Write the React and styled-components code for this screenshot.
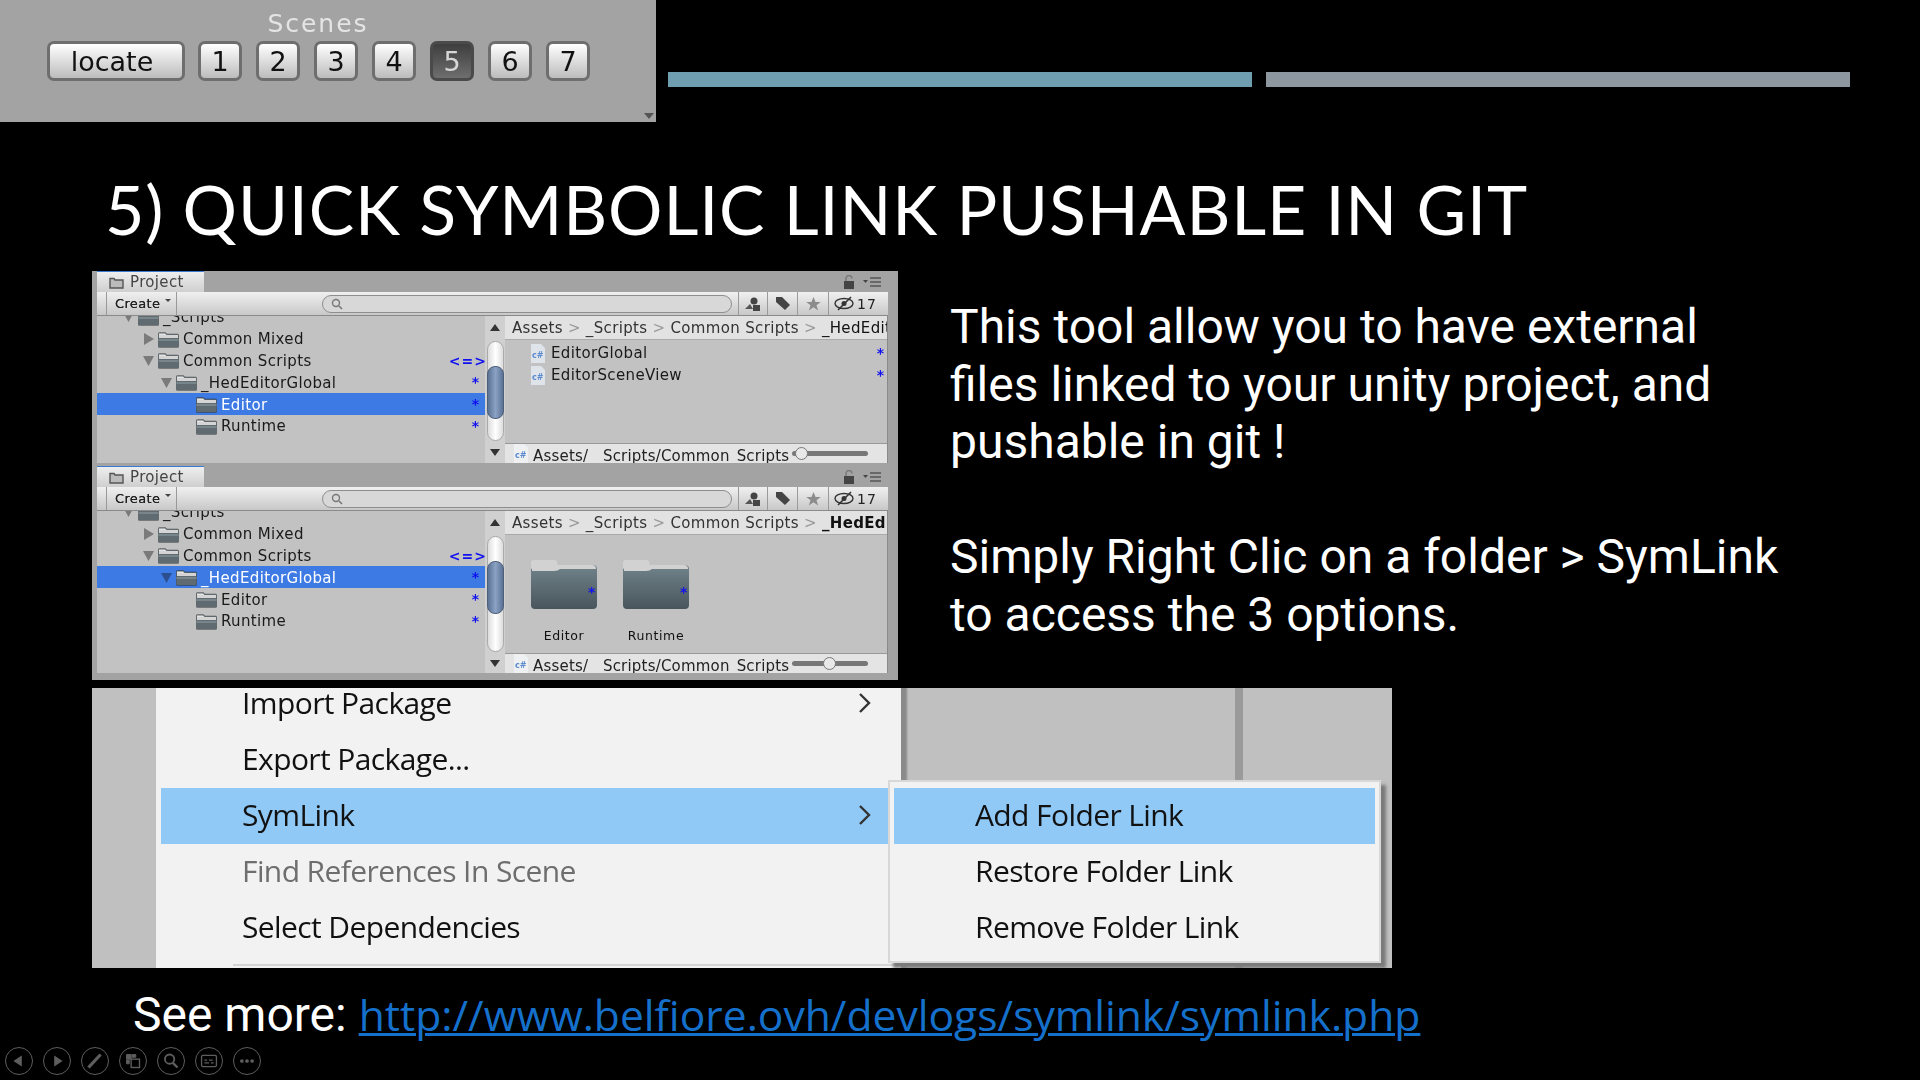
import React from "react";
import styled, { createGlobalStyle } from "styled-components";

const Global = createGlobalStyle`
  html, body { margin: 0; padding: 0; background: #000; }
  * { box-sizing: border-box; }
`;

const Slide = styled.div`
  width: 1920px; height: 1080px; background: #000; overflow: hidden;
  display: flex; flex-direction: column; position: relative;
  font-family: "Roboto", sans-serif;
`;
const TopRow = styled.div`display: flex; height: 122px; flex: none;`;
const ScenesPanel = styled.div`
  position: relative; width: 656px; background: #a3a3a3;
  padding: 10px 0 0 47px; display: flex; flex-direction: column;
  filter: blur(0.5px);
`;
const ScenesLabel = styled.div`
  width: 542px; text-align: center; font: 25px/28px "DejaVu Sans", sans-serif;
  letter-spacing: 2px; color: #e4e4e4; height: 31px;
`;
const SceneButtons = styled.div`display: flex; gap: 14px;`;
const SceneButton = styled.div`
  width: ${p => p.$w || 44}px; height: 40px; margin-right: ${p => p.$mr || 0}px;
  padding-right: ${p => p.$pr || 0}px;
  border: 3px solid ${p => p.$on ? "#4a4a4a" : "#6e6e6e"}; border-radius: 7px;
  background: ${p => p.$on ? "linear-gradient(#3e3e3e,#6e6e6e)" : "linear-gradient(#fff,#bcbcbc)"};
  color: ${p => p.$on ? "#d6d6d6" : "#111"};
  font: 27px/36px "DejaVu Sans", sans-serif; text-align: center;
`;
const CornerArrow = styled.div`
  position: absolute; right: 2px; bottom: 3px; width: 0; height: 0;
  border-left: 5px solid transparent; border-right: 5px solid transparent;
  border-top: 6px solid #555;
`;
const Bars = styled.div`display: flex; gap: 14px; padding: 72px 0 0 12px;`;
const Bar = styled.div`width: 584px; height: 15px; background: ${p => p.$c};`;
const Title = styled.h1`
  margin: 42px 0 0 105px; height: 107px; font: 400 68px/90px "Lato", sans-serif;
  letter-spacing: .87px; color: #fff; white-space: nowrap;
`;
const Content = styled.div`display: flex; height: 409px; flex: none;`;
const Unity = styled.div`
  width: 806px; margin-left: 92px; background: #a3a3a3; display: flex; flex-direction: column;
  color: #1a1a1a; font: 15px/22px "DejaVu Sans", sans-serif; letter-spacing: .35px;
  filter: blur(0.45px); overflow: hidden;
`;
const Project = styled.div`
  height: ${p => p.$h}px; flex: none; padding: 0 10px ${p => p.$pb}px 5px; display: flex; flex-direction: column;
`;
const TabRow = styled.div`display: flex; height: 21px; justify-content: space-between; flex: none;`;
const Tab = styled.div`
  width: 107px; border-top: 1px solid #3c7ad0; background: linear-gradient(#eee,#cfcfcf);
  color: #444; padding-left: 12px; display: flex; align-items: center; gap: 6px; font-size: 15px;
`;
const PaneTools = styled.div`display: flex; align-items: center; gap: 8px; padding-right: 7px;`;
const Toolbar = styled.div`
  height: 24px; flex: none; display: flex; align-items: stretch; padding-left: 9px;
  background: linear-gradient(#f0f0f0,#c8c8c8); border-bottom: 1px solid #8a8a8a;
`;
const CreateButton = styled.div`
  width: 71px; padding-left: 8px; font-size: 13px; border: 1px solid #999; border-width: 0 1px;
  color: #222; display: flex; align-items: center; gap: 5px; text-shadow: 0 0 .6px #222;
`;
const Caret = styled.span`
  width: 0; height: 0; border-left: 3px solid transparent; border-right: 3px solid transparent;
  border-top: 3px solid #444; margin-bottom: 6px;
`;
const Search = styled.div`
  width: 410px; height: 18px; margin: 3px 6px 0 145px; border: 1.5px solid #8e8e8e; border-radius: 9px;
  background: #d8d8d8; padding-left: 8px; display: flex; align-items: center; flex: none;
`;
const ToolIcon = styled.div`
  width: ${p => p.$w || 29}px; flex: none; border-left: 1px solid #9a9a9a;
  display: flex; align-items: center; justify-content: center; gap: 3px; font-size: 14px; color: #222; letter-spacing: 1px;
`;
const Split = styled.div`flex: 1; display: flex; min-height: 0;`;
const Tree = styled.div`width: 388px; flex: none; background: #c2c2c2; overflow: hidden; position: relative;`;
const TreeScroll = styled.div`margin-top: -10px;`;
const TreeRow = styled.div`
  height: 21.8px; display: flex; align-items: center; padding-left: ${p => p.$indent}px; padding-top: 1px; position: relative;
  background: ${p => p.$sel ? "#3d7ae4" : "transparent"}; color: ${p => p.$sel ? "#fff" : "#1a1a1a"};
  white-space: nowrap;
`;
const Arrow = styled.span`
  width: 15px; height: 12px; flex: none; display: flex; align-items: center;
`;
const RowMark = styled.span`
  position: absolute; right: ${p => p.$r ?? 3}px; top: ${p => p.$t || 0}px; color: #1010f0; font-weight: 700; font-size: 14px;
  letter-spacing: ${p => p.$ls || 0}px;
`;
const Scroll = styled.div`
  width: 20px; flex: none; background: #d0d0d0; position: relative; display: flex; flex-direction: column;
  align-items: center;
`;
const ScrollTrack = styled.div`
  width: 17px; height: ${p => p.$h}px; margin-top: 10px; border-radius: 9px; background: linear-gradient(90deg,#ddd,#fff,#ddd); border: 1px solid #aaa;
  position: relative; padding-top: 24px;
`;
const ScrollThumb = styled.div`
  width: 17px; height: 53px; margin-left: -1px; border-radius: 8px; border: 1px solid #4c5e78;
  background: linear-gradient(90deg,#5a7295,#8ba2c4,#5a7295);
`;
const ScrollArrow = styled.div`
  width: 0; height: 0; border-left: 5px solid transparent; border-right: 5px solid transparent;
  ${p => p.$up ? "border-bottom: 7px solid #333; margin-top: 8px;" : "border-top: 7px solid #333; margin-top: 8px;"}
`;
const Right = styled.div`flex: 1; min-width: 0; display: flex; flex-direction: column; background: #c2c2c2; border-right: 1px solid #8a8a8a;`;
const Crumbs = styled.div`
  height: 24px; flex: none; background: #e2e2e2; display: flex; align-items: center; padding-left: 7px;
  overflow: hidden; white-space: nowrap; gap: 5px; color: #333; border-bottom: 1px solid #aaa;
`;
const CrumbSep = styled.span`color: #999; font-size: 15px;`;
const CrumbLast = styled.span`font-weight: ${p => p.$bold ? 700 : 400}; color: #111;`;
const Files = styled.div`flex: 1; padding-top: 2px; min-height: 0;`;
const FileRow = styled.div`
  height: 22px; display: flex; align-items: center; padding-left: 26px; gap: 6px; position: relative;
`;
const FolderGrid = styled.div`flex: 1; display: flex; gap: 26px; padding: 22px 0 0 26px; min-height: 0;`;
const BigFolder = styled.div`
  width: 66px; position: relative; display: flex; flex-direction: column; align-items: center; font-size: 12.5px;
  line-height: 16px; font-weight: 500; letter-spacing: .6px; color: #111; gap: 18px;
`;
const BigMark = styled.span`
  position: absolute; right: 1px; top: 27px; color: #1010f0; font-size: 14px; font-weight: 700;
`;
const BottomBar = styled.div`
  height: 20px; flex: none; background: #e4e4e4; border-top: 1px solid #999; display: flex; padding-left: 9px; gap: 5px;
  overflow: hidden; align-items: flex-start; position: relative; white-space: nowrap;
`;
const PathText = styled.div`margin-top: 1px; color: #222; word-spacing: 2px; letter-spacing: .2px;`;
const Slider = styled.div`
  position: absolute; left: 287px; top: 7px; width: 76px; height: 5px; border-radius: 3px; background: #777;
`;
const SliderThumb = styled.div`
  position: absolute; left: ${p => p.$x}px; top: -4px; width: 13px; height: 13px; border-radius: 50%; background: #e8e8e8; border: 1px solid #777;
`;
const Body = styled.div`
  margin-left: 52px; padding-top: 27px; font-size: 48px; line-height: 57.5px; color: #fff; white-space: pre-line;
`;
const MenuShot = styled.div`
  width: 1300px; height: 280px; margin: 8px 0 0 92px; background: #c0c0c0; position: relative; overflow: hidden; flex: none;
  font: 500 30px/56px "Open Sans", sans-serif; color: #111; display: flex; filter: blur(0.4px);
`;
const MainMenu = styled.div`
  width: 745px; margin-left: 64px; background: #f2f2f2; padding-left: 5px; box-shadow: 6px 0 2px #8a8a8a; height: 292px; margin-top: -12px;
  flex: none;
`;
const MenuRow = styled.div`
  height: 56px; display: flex; justify-content: space-between; align-items: center;
  padding: 0 29px 2px 81px; white-space: nowrap; letter-spacing: -.6px;
  background: ${p => p.$hot ? "#90c8f6" : "transparent"}; color: ${p => p.$dim ? "#6e6e6e" : "#111"};
`;
const MenuSeparator = styled.div`height: 2px; margin: 8px 0 0 72px; background: #d4d4d4;`;
const Divider = styled.div`width: 8px; height: 100%; background: #9a9a9a; margin-left: 334px; flex: none;`;
const Submenu = styled.div`
  position: absolute; left: 796px; top: 92px; width: 493px; height: 183px; background: #f2f2f2;
  border: 2px solid #d8d8d8; padding: 6px 4px; box-shadow: 5px 5px 3px #7a7a7a;
`;
const SubRow = styled(MenuRow)`padding: 0 0 2px 81px;`;
const SeeMore = styled.div`
  display: flex; align-items: baseline; padding: 10px 0 0 133px; height: 72px; flex: none; gap: 12px;
  font-size: 48px; line-height: 74px; color: #fff; white-space: nowrap;
`;
const LinkText = styled.a`font: 42.6px "Open Sans", sans-serif; color: #1570cc; text-decoration: underline; text-decoration-thickness: 3px;`;
const Nav = styled.div`
  position: absolute; left: 5px; top: 1047px; display: flex; gap: 10px;
`;
const NavButton = styled.div`
  width: 28px; height: 28px; border-radius: 50%; border: 1.5px solid #5e5e5e; display: flex; align-items: center; justify-content: center;
`;

const Folder = ({ sel }) => (
  <svg width="21" height="17" viewBox="0 0 21 17" style={{ flex: "none", marginRight: 4 }}>
    <path d="M0 3a1.5 1.5 0 0 1 1.5-1.5h6L9 3h10.5A1.5 1.5 0 0 1 21 4.5V15a1.5 1.5 0 0 1-1.5 1.5h-18A1.5 1.5 0 0 1 0 15z" fill="#5f6b70" stroke={sel ? "#2a3d60" : "#666"} strokeWidth=".6"/>
    <rect x="1" y="4" width="19" height="3" fill="#d4d4d4"/>
    <path d="M1 2.5h6L8.5 4H1z" fill="#e4e4e4"/>
    <rect x=".5" y="8" width="20" height="2" fill="#78868c"/>
  </svg>
);
const Tri = ({ open, sel }) => (
  <Arrow>
    <svg width="12" height="12" viewBox="0 0 12 12">
      {open ? <path d="M0 1h11L5.5 11z" fill={sel ? "#2c4f90" : "#7a7a7a"}/> : <path d="M1 0l10 6-10 6z" fill="#7a7a7a"/>}
    </svg>
  </Arrow>
);
const CsIcon = ({ small }) => (
  <svg width="14" height="19" viewBox="0 0 14 19" style={{ flex: "none" }}>
    <path d="M0 0h10l4 4v15H0z" fill={small ? "#eef0f2" : "#dfe4ea"}/>
    <text x="1" y="14" fontSize="8" fontWeight="700" fill="#5a8ad0" fontFamily="DejaVu Sans" letterSpacing="0">c#</text>
  </svg>
);
const Mag = () => (
  <svg width="12" height="12" viewBox="0 0 12 12"><circle cx="5" cy="5" r="3.5" fill="none" stroke="#777" strokeWidth="1.4"/><path d="M8 8l3 3" stroke="#777" strokeWidth="1.6"/></svg>
);
const Lock = () => (
  <svg width="12" height="14" viewBox="0 0 12 14"><rect x="1" y="6" width="10" height="8" fill="#444"/><path d="M3 6V3.5a3 3 0 0 1 6 0" fill="none" stroke="#777" strokeWidth="1.4"/></svg>
);
const Lines = () => (
  <svg width="18" height="10" viewBox="0 0 18 10"><path d="M0 3h5L2.5 6z" fill="#444"/><path d="M7 1h11M7 5h11M7 9h11" stroke="#555" strokeWidth="1.3"/></svg>
);
const TabFolder = () => (
  <svg width="15" height="13" viewBox="0 0 15 13"><path d="M1 2.5h4l1 1.5h8v8H1z" fill="#bbb" stroke="#555" strokeWidth="1.4"/></svg>
);
const Person = () => (
  <svg width="16" height="14" viewBox="0 0 16 14"><circle cx="9" cy="4" r="3.5" fill="#444"/><path d="M0 12l5-5 3 5z" fill="#555"/><rect x="8" y="8" width="7" height="6" fill="#444"/></svg>
);
const Tag = () => (
  <svg width="16" height="15" viewBox="0 0 16 15"><path d="M1 1h6l8 8-5 5-9-8z" fill="#444"/></svg>
);
const Star = () => (
  <svg width="15" height="14" viewBox="0 0 15 14"><path d="M7.5 0l2 5h5.2l-4.2 3.2 1.6 5.3-4.6-3.2-4.6 3.2 1.6-5.3L.3 5h5.2z" fill="#8c8c8c"/></svg>
);
const EyeOff = () => (
  <svg width="20" height="15" viewBox="0 0 20 15"><ellipse cx="10" cy="7.5" rx="9" ry="5" fill="none" stroke="#333" strokeWidth="1.4"/><circle cx="10" cy="7.5" r="2.5" fill="#333"/><path d="M4 14L17 1" stroke="#333" strokeWidth="1.6"/></svg>
);
const BigFolderIcon = () => (
  <svg width="66" height="53" viewBox="0 0 66 53">
    <defs>
      <linearGradient id="bf" x1="0" y1="0" x2="0" y2="1"><stop offset="0" stopColor="#76878f"/><stop offset="1" stopColor="#48555c"/></linearGradient>
    </defs>
    <path d="M0 8a4 4 0 0 1 4-4h19a4 4 0 0 1 4 4h35a4 4 0 0 1 4 4v36a4 4 0 0 1-4 4H4a4 4 0 0 1-4-4z" fill="url(#bf)"/>
    <path d="M1 12a5 5 0 0 1 4-9h18q4 0 4 5h34q4 0 4 4h-36q-2 2-6 2H1z" fill="#d2d2d2"/>
  </svg>
);

const Chevron = () => (
  <svg width="14" height="22" viewBox="0 0 14 22"><path d="M2 2l9 9-9 9" fill="none" stroke="#333" strokeWidth="2.4"/></svg>
);

const tree = [
  { n: "_Scripts", i: 26, open: true },
  { n: "Common Mixed", i: 46 },
  { n: "Common Scripts", i: 46, open: true, mark: "<=>" },
  { n: "_HedEditorGlobal", i: 64, open: true, mark: "*" },
  { n: "Editor", i: 99, leaf: true, mark: "*" },
  { n: "Runtime", i: 99, leaf: true, mark: "*" },
];

const ProjectPane = ({ h, pb, selected, second, thumb }) => (
  <Project $h={h} $pb={pb}>
    <TabRow>
      <Tab><TabFolder />Project</Tab>
      <PaneTools><Lock /><Lines /></PaneTools>
    </TabRow>
    <Toolbar>
      <CreateButton>Create <Caret /></CreateButton>
      <Search><Mag /></Search>
      <ToolIcon><Person /></ToolIcon>
      <ToolIcon $w={30}><Tag /></ToolIcon>
      <ToolIcon $w={31}><Star /></ToolIcon>
      <ToolIcon $w={54}><EyeOff />17</ToolIcon>
    </Toolbar>
    <Split>
      <Tree>
        <TreeScroll>
          {tree.map(r => (
            <TreeRow key={r.n} $indent={r.i} $sel={r.n === selected}>
              {!r.leaf && <Tri open={r.open} sel={r.n === selected} />}
              <Folder sel={r.n === selected} />
              {r.n}
              {r.mark && <RowMark $r={r.mark === "*" ? 6 : -2} $ls={r.mark === "*" ? 0 : 1}>{r.mark}</RowMark>}
            </TreeRow>
          ))}
        </TreeScroll>
      </Tree>
      <Scroll>
        <ScrollArrow $up />
        <ScrollTrack $h={second ? 116 : 100}><ScrollThumb /></ScrollTrack>
        <ScrollArrow />
      </Scroll>
      <Right>
        <Crumbs>
          <span>Assets</span><CrumbSep>&gt;</CrumbSep>
          <span>_Scripts</span><CrumbSep>&gt;</CrumbSep>
          <span>Common Scripts</span><CrumbSep>&gt;</CrumbSep>
          <CrumbLast $bold={second}>_HedEditorGlobal</CrumbLast>
        </Crumbs>
        {second ? (
          <FolderGrid>
            <BigFolder><BigFolderIcon /><BigMark>*</BigMark>Editor</BigFolder>
            <BigFolder><BigFolderIcon /><BigMark>*</BigMark>Runtime</BigFolder>
          </FolderGrid>
        ) : (
          <Files>
            <FileRow><CsIcon />EditorGlobal<RowMark $r={3}>*</RowMark></FileRow>
            <FileRow><CsIcon />EditorSceneView<RowMark $r={3}>*</RowMark></FileRow>
          </Files>
        )}
        <BottomBar>
          <CsIcon small />
          <PathText>Assets/ _Scripts/Common Scripts</PathText>
          <Slider><SliderThumb $x={thumb} /></Slider>
        </BottomBar>
      </Right>
    </Split>
  </Project>
);

const navIcons = [
  <path d="M17 8v12l-9-6z" fill="#5e5e5e"/>,
  <path d="M11 8v12l9-6z" fill="#5e5e5e"/>,
  <path d="M7 21L20 7" stroke="#5e5e5e" strokeWidth="3.5"/>,
  <g fill="none" stroke="#5e5e5e"><path d="M7 7h5v5H7zM13 7h4v3h-4zM7 13h3v4H7z" fill="#5e5e5e"/><rect x="12" y="12" width="9" height="9" strokeWidth="1.5"/></g>,
  <g fill="none" stroke="#5e5e5e" strokeWidth="2"><circle cx="12.5" cy="12" r="5"/><path d="M16 16l5 5" strokeWidth="2.6"/></g>,
  <g fill="none" stroke="#5e5e5e" strokeWidth="1.4"><rect x="6" y="8" width="16" height="12" rx="1.5"/><path d="M9 13h3M14 13h4M9 16h5M16 16h3"/></g>,
  <g fill="#5e5e5e"><circle cx="8.5" cy="14" r="2"/><circle cx="14" cy="14" r="2"/><circle cx="19.5" cy="14" r="2"/></g>,
];

export default function App() {
  return (
    <Slide>
      <Global />
      <TopRow>
        <ScenesPanel>
          <ScenesLabel>Scenes</ScenesLabel>
          <SceneButtons>
            <SceneButton $w={138} $mr={-1} $pr={8}>locate</SceneButton>
            {[1, 2, 3, 4, 5, 6, 7].map(n => <SceneButton key={n} $on={n === 5}>{n}</SceneButton>)}
          </SceneButtons>
          <CornerArrow />
        </ScenesPanel>
        <Bars>
          <Bar $c="#6e9eb0" />
          <Bar $c="#8d97a0" />
        </Bars>
      </TopRow>
      <Title>5) QUICK SYMBOLIC LINK PUSHABLE IN GIT</Title>
      <Content>
        <Unity>
          <ProjectPane h={195} pb={3} selected="Editor" thumb={3} />
          <ProjectPane h={214} pb={7} selected="_HedEditorGlobal" second thumb={31} />
        </Unity>
        <Body>{"This tool allow you to have external\nfiles linked to your unity project, and\npushable in git !\n\nSimply Right Clic on a folder > SymLink\nto access the 3 options."}</Body>
      </Content>
      <MenuShot>
        <MainMenu>
          <MenuRow>Import Package<Chevron /></MenuRow>
          <MenuRow>Export Package...</MenuRow>
          <MenuRow $hot>SymLink<Chevron /></MenuRow>
          <MenuRow $dim>Find References In Scene</MenuRow>
          <MenuRow>Select Dependencies</MenuRow>
          <MenuSeparator />
        </MainMenu>
        <Divider />
        <Submenu>
          <SubRow $hot>Add Folder Link</SubRow>
          <SubRow>Restore Folder Link</SubRow>
          <SubRow>Remove Folder Link</SubRow>
        </Submenu>
      </MenuShot>
      <SeeMore>See more: <LinkText>http://www.belfiore.ovh/devlogs/symlink/symlink.php</LinkText></SeeMore>
      <Nav>
        {navIcons.map((ic, i) => (
          <NavButton key={i}><svg width="28" height="28" viewBox="0 0 28 28">{ic}</svg></NavButton>
        ))}
      </Nav>
    </Slide>
  );
}
